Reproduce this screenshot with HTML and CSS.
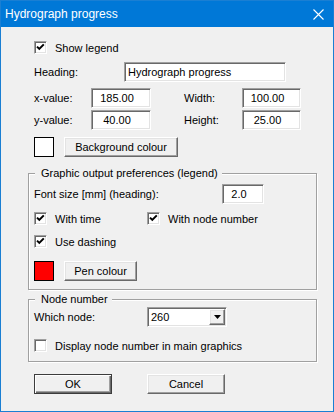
FILE: index.html
```html
<!DOCTYPE html>
<html lang="en">
<head>
    <meta charset="UTF-8">
    <meta name="viewport" content="width=device-width, initial-scale=1.0">
    <title>Hydrograph progress</title>
    <link rel="stylesheet" href="styles.css">
</head>
<body>
    <div class="dialog">
        <div class="titlebar">
            <span class="title">Hydrograph progress</span>
            <svg class="close" width="11" height="11" viewBox="0 0 11 11">
                <path d="M0.5 0.5 L10.5 10.5 M10.5 0.5 L0.5 10.5" stroke="#fff" stroke-width="1.1" fill="none"/>
            </svg>
        </div>

        <div class="content">
            <div class="row r-show">
                <span class="check"><svg width="11" height="11" viewBox="0 0 11 11"><path d="M2 4.6 L4.3 6.9 L8.8 2.4" stroke="#000" stroke-width="2" fill="none"/></svg></span>
                <span>Show legend</span>
            </div>

            <div class="row r-heading">
                <span class="lbl w-heading">Heading:</span>
                <span class="field txt w-headfield">Hydrograph progress</span>
            </div>

            <div class="row r-x">
                <span class="lbl w-xlabel">x-value:</span>
                <span class="field num w-xfield">185.00</span>
                <span class="lbl w-rlabel">Width:</span>
                <span class="field num w-rfield">100.00</span>
            </div>

            <div class="row r-y">
                <span class="lbl w-xlabel">y-value:</span>
                <span class="field num w-xfield">40.00</span>
                <span class="lbl w-rlabel">Height:</span>
                <span class="field num w-rfield">25.00</span>
            </div>

            <div class="row r-bg">
                <span class="swatch white"></span>
                <span class="btn w-bgbtn">Background colour</span>
            </div>

            <div class="group group-legend">
                <span class="group-title">Graphic output preferences (legend)</span>
                <div class="row r-font">
                    <span class="lbl w-fontlabel">Font size [mm] (heading):</span>
                    <span class="field num w-fontfield">2.0</span>
                </div>
                <div class="row r-c1">
                    <span class="check-item">
                        <span class="check"><svg width="11" height="11" viewBox="0 0 11 11"><path d="M2 4.6 L4.3 6.9 L8.8 2.4" stroke="#000" stroke-width="2" fill="none"/></svg></span>
                        <span>With time</span>
                    </span>
                    <span class="check-item">
                        <span class="check"><svg width="11" height="11" viewBox="0 0 11 11"><path d="M2 4.6 L4.3 6.9 L8.8 2.4" stroke="#000" stroke-width="2" fill="none"/></svg></span>
                        <span>With node number</span>
                    </span>
                </div>
                <div class="row r-c2">
                    <span class="check"><svg width="11" height="11" viewBox="0 0 11 11"><path d="M2 4.6 L4.3 6.9 L8.8 2.4" stroke="#000" stroke-width="2" fill="none"/></svg></span>
                    <span>Use dashing</span>
                </div>
                <div class="row r-pen">
                    <span class="swatch red"></span>
                    <span class="btn w-penbtn">Pen colour</span>
                </div>
            </div>

            <div class="group group-node">
                <span class="group-title">Node number</span>
                <div class="row r-node">
                    <span class="lbl w-nodelabel">Which node:</span>
                    <span class="field combo">
                        <span class="combo-value">260</span>
                        <span class="combo-btn"><svg width="7" height="4" viewBox="0 0 7 4"><polygon points="0,0 7,0 3.5,4" fill="#000"/></svg></span>
                    </span>
                </div>
                <div class="row r-disp">
                    <span class="check"></span>
                    <span>Display node number in main graphics</span>
                </div>
            </div>

            <div class="row r-buttons">
                <span class="btn default w-okbtn">OK</span>
                <span class="btn w-okbtn">Cancel</span>
            </div>
        </div>
    </div>
</body>
</html>
```

FILE: styles.css
```css
body {
    margin: 0;
    font-family: "Liberation Sans", Arial, sans-serif;
    font-size: 11px;
    color: #000;
    background: #fff;
}
.dialog {
    width: 334px;
    height: 412px;
    box-sizing: border-box;
    border: 1px solid #1a7fd3;
    background: #f0f0f0;
    display: flex;
    flex-direction: column;
}
.titlebar {
    height: 26px;
    flex: none;
    background: #0078d7;
    color: #fff;
    font-size: 12px;
    display: flex;
    align-items: center;
    justify-content: space-between;
    padding: 0 9px 0 4px;
}
.close {
    display: block;
}
.content {
    padding: 0 16px 0 27px;
}
.row {
    display: flex;
    align-items: center;
    margin-left: 6px;
}
.lbl {
    flex: none;
}

/* vertical rhythm */
.r-show { height: 13px; margin-top: 14px; }
.r-heading { height: 20px; margin-top: 8px; }
.r-x { height: 20px; margin-top: 6px; }
.r-y { height: 20px; margin-top: 2px; }
.r-bg { height: 20px; margin-top: 7px; }
.r-font { height: 20px; margin-top: 4px; }
.r-c1 { height: 13px; margin-top: 8px; }
.r-c2 { height: 13px; margin-top: 10px; }
.r-pen { height: 20px; margin-top: 13px; }
.r-node { height: 20px; margin-top: 1px; }
.r-disp { height: 13px; margin-top: 12px; }
.r-buttons { height: 20px; margin-top: 12px; gap: 35px; }

/* widths */
.w-heading { width: 90px; }
.w-headfield { width: 162px; }
.w-xlabel { width: 57px; }
.w-xfield { width: 60px; }
.w-rlabel { width: 58px; margin-left: 33px; }
.w-rfield { width: 59px; }
.w-fontlabel { width: 188px; }
.w-fontfield { width: 42px; }
.w-nodelabel { width: 113px; }
.w-bgbtn { width: 114px; }
.w-penbtn { width: 73px; }
.w-okbtn { width: 78px; }

.field {
    box-sizing: border-box;
    height: 20px;
    flex: none;
    background: #fff;
    border: 1px solid;
    border-color: #a0a0a0 #fff #fff #a0a0a0;
    box-shadow: inset 1px 1px 0 #696969, inset -1px -1px 0 #e3e3e3;
    display: flex;
    align-items: center;
    white-space: nowrap;
}
.field.txt {
    padding-left: 3px;
}
.field.num {
    justify-content: center;
    padding-right: 8px;
}
.combo {
    width: 80px;
    justify-content: space-between;
}
.combo-value {
    padding-left: 3px;
}
.combo-btn {
    box-sizing: border-box;
    width: 16px;
    height: 16px;
    margin: 1px;
    background: #f0f0f0;
    border: 1px solid;
    border-color: #fff #696969 #696969 #fff;
    box-shadow: inset -1px -1px 0 #a0a0a0, inset 1px 1px 0 #e3e3e3;
    display: flex;
    align-items: center;
    justify-content: center;
}
.combo-btn svg {
    display: block;
}

.check {
    box-sizing: border-box;
    width: 13px;
    height: 13px;
    flex: none;
    margin-right: 8px;
    background: #fff;
    border: 1px solid;
    border-color: #a0a0a0 #fff #fff #a0a0a0;
    box-shadow: inset 1px 1px 0 #696969, inset -1px -1px 0 #e3e3e3;
}
.check svg {
    display: block;
}
.check-item {
    display: flex;
    align-items: center;
    width: 113px;
    flex: none;
    white-space: nowrap;
}

.swatch {
    box-sizing: border-box;
    width: 20px;
    height: 20px;
    flex: none;
    margin-right: 10px;
    border: 1px solid #000;
}
.swatch.white { background: #fff; }
.swatch.red { background: #ff0000; }

.btn {
    box-sizing: border-box;
    height: 20px;
    flex: none;
    display: flex;
    align-items: center;
    justify-content: center;
    background: #f0f0f0;
    border: 1px solid;
    border-color: #fff #696969 #696969 #fff;
    box-shadow: inset -1px -1px 0 #a0a0a0, inset 1px 1px 0 #e3e3e3;
}
.btn.default {
    border: 1px solid #3c3c3c;
    box-shadow: inset 1px 1px 0 #fff, inset -1px -1px 0 #696969, inset -2px -2px 0 #a0a0a0;
}

.group {
    border: 1px solid #a0a0a0;
    box-shadow: inset 1px 1px 0 #fff, 1px 1px 0 #fff;
    padding: 0 0 8px 5px;
}
.group .row {
    margin-left: 0;
}
.group-title {
    display: block;
    width: max-content;
    line-height: 13px;
    margin: -7px 0 0 1px;
    padding: 0 4px 0 6px;
    background: #f0f0f0;
}
.group-legend {
    margin-top: 16px;
}
.group-node {
    margin-top: 9px;
    padding-bottom: 9px;
}
```
